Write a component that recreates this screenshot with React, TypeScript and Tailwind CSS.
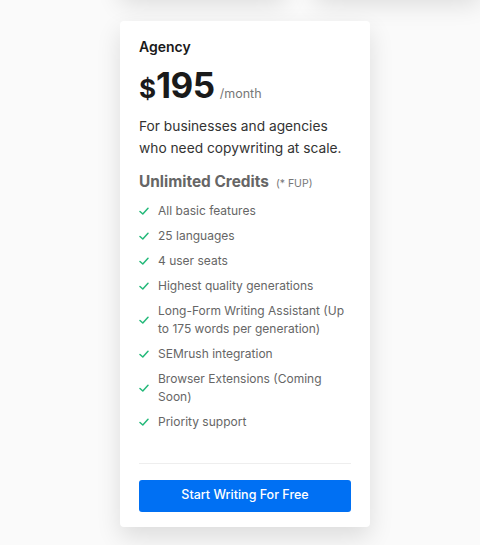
import React from "react";

const features: string[] = [
  "All basic features",
  "25 languages",
  "4 user seats",
  "Highest quality generations",
  "Long-Form Writing Assistant (Up to 175 words per generation)",
  "SEMrush integration",
  "Browser Extensions (Coming Soon)",
  "Priority support",
];

function Check() {
  return (
    <svg width="10" height="10" viewBox="0 0 10 10" fill="none" className="shrink-0">
      <path d="M1 5.5 L3.8 8 L9 2.2" stroke="#24b97a" strokeWidth="1.5" strokeLinecap="round" strokeLinejoin="round" />
    </svg>
  );
}

export default function App() {
  return (
    <div
      className="w-[480px] h-[545px] bg-[#fafafa] overflow-hidden"
      style={{ fontFamily: "Inter, 'Noto Sans', sans-serif" }}
    >
      <div className="flex flex-col gap-[27px] pl-[120px] mt-[-106px]">
        <div className="flex gap-[30px]">
          <div className="w-[250px] h-[100px] bg-white rounded-[4px] shadow-[0_10px_25px_rgba(0,0,0,0.12)]" />
          <div className="w-[250px] h-[100px] bg-white rounded-[4px] shadow-[0_10px_25px_rgba(0,0,0,0.12)]" />
        </div>
        <div className="w-[250px] bg-white rounded-[4px] shadow-[0_10px_25px_rgba(0,0,0,0.12)] px-[19px] pt-[15px] pb-[15px] flex flex-col">
          <div className="text-[14px] font-semibold text-[#1a1a1a] leading-[22px]">Agency</div>
          <div className="flex items-baseline mt-[9px] text-[#1a1a1a]">
            <span className="text-[26px] font-bold leading-none">$</span>
            <span className="text-[35px] font-bold leading-[36px] tracking-[-0.5px]">195</span>
            <span className="text-[12.5px] text-[#777] ml-[5px]">/month</span>
          </div>
          <p className="text-[13.75px] leading-[22px] text-[#333] mt-[11px]">
            For businesses and agencies who need copywriting at scale.
          </p>
          <div className="flex items-baseline mt-[12px]">
            <span className="text-[15.4px] font-bold text-[#666] leading-[22px]">Unlimited Credits</span>
            <span className="text-[10.5px] text-[#777] ml-[7px]">(* FUP)</span>
          </div>
          <ul className="flex flex-col gap-[7px] mt-[9px]">
            {features.map((f) => (
              <li key={f} className="flex items-center gap-[9px]">
                <Check />
                <span className="text-[12px] leading-[18px] text-[#666]">{f}</span>
              </li>
            ))}
          </ul>
          <div className="h-px bg-[#eeeeee] mt-[32px]" />
          <button className="mt-[16px] h-[32px] w-full rounded-[3px] bg-[#0070f3] text-white text-[12.5px] font-medium">
            Start Writing For Free
          </button>
        </div>
      </div>
    </div>
  );
}
